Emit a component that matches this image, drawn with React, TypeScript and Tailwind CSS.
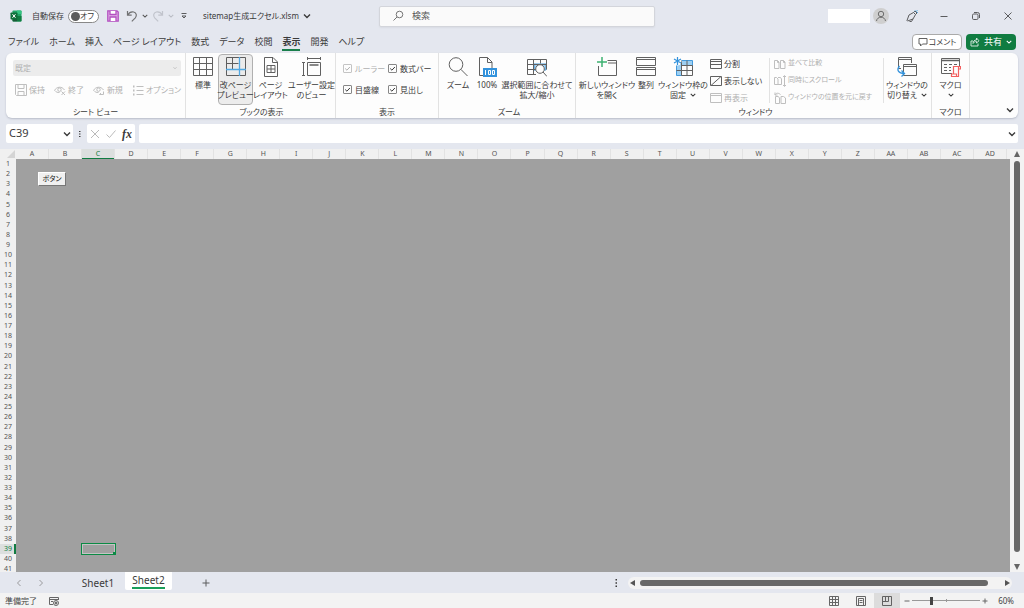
import { useState } from "react";
import type { ReactNode } from "react";
import clsx from "clsx";

const TABS = ["ファイル", "ホーム", "挿入", "ページ レイアウト", "数式", "データ", "校閲", "表示", "開発", "ヘルプ"];

const COLUMNS = Array.from({ length: 30 }, (_, i) =>
  i < 26 ? String.fromCharCode(65 + i) : "A" + String.fromCharCode(65 + i - 26)
);
const ROWS = Array.from({ length: 41 }, (_, i) => i + 1);

/* ---------- icons ---------- */

function Icon({ size = "size-5", box = 20, children }: { size?: string; box?: number; children: ReactNode }) {
  return (
    <svg className={clsx("shrink-0 opacity-80", size)} viewBox={`0 0 ${box} ${box}`} fill="none" stroke="currentColor" strokeWidth={1} aria-hidden="true">
      {children}
    </svg>
  );
}

function Chevron({ size = "size-1.5" }: { size?: string }) {
  return (
    <svg className={clsx("shrink-0", size)} viewBox="0 0 8 8" fill="none" stroke="currentColor" strokeWidth={1.4} aria-hidden="true">
      <path d="M1 2.5l3 3 3-3" />
    </svg>
  );
}

const ExcelIcon = () => (
  <svg className="size-3 shrink-0" viewBox="0 0 12 12" aria-hidden="true">
    <rect x="2.5" y="0.5" width="9" height="11" rx="0.8" fill="#21a366" />
    <path d="M7 .5h3.7a.8.8 0 01.8.8V4H7z" fill="#33c481" />
    <path d="M2.5 6H7v5.5H3.3a.8.8 0 01-.8-.8z" fill="#185c37" />
    <path d="M7 6h4.5v4.7a.8.8 0 01-.8.8H7z" fill="#107c41" />
    <rect x="0.5" y="2.5" width="7" height="7" rx="0.7" fill="#0f703b" />
    <path d="M2.5 4.2l3 3.6M5.5 4.2l-3 3.6" stroke="#fff" strokeWidth="1" />
  </svg>
);

const SaveIcon = () => (
  <svg className="size-3 shrink-0" viewBox="0 0 12 12" fill="none" stroke="#b34fc0" strokeWidth="1.3" aria-hidden="true">
    <path d="M.8.8h9.2l1.2 1.2v9.2H.8z" fill="#e2b5e8" />
    <path d="M3 1v3.5h6V1M3 11V7h6v4" fill="#fff" />
  </svg>
);

const UndoIcon = () => (
  <Icon size="size-3" box={12}>
    <path d="M1.5 1v4.2h4.2M1.7 5C3.2 2.5 5.5 1.5 7.7 2c2.7.7 3.5 3.8 1.6 5.8L5.8 11.3" strokeWidth="1.2" />
  </Icon>
);

const RedoIcon = () => (
  <Icon size="size-3" box={12}>
    <path d="M10.5 1v4.2H6.3M10.3 5C8.8 2.5 6.5 1.5 4.3 2 1.6 2.7.8 5.8 2.7 7.8l3.5 3.5" strokeWidth="1.2" />
  </Icon>
);

const NormalIcon = () => (
  <Icon>
    <path d="M.5.5h19v18H.5zM.5 6.5h19M.5 12.5h19M6.5.5v18M13.5.5v18" />
  </Icon>
);

const PageBreakIcon = () => (
  <Icon>
    <path d="M.5.5h19v18H.5zM.5 6.5h12M6.5.5v12" />
    <path d="M0 12.5h20M13.5 0v19" stroke="#2b98e0" strokeWidth="1.3" />
  </Icon>
);

const PageLayoutIcon = () => (
  <Icon>
    <path d="M3.5.5h8.5l4.5 4.5v14.5h-13zM11.5.5V5.5h5M6 8.5h8v7H6zM6 12h8M10 8.5v7" />
  </Icon>
);

const CustomViewIcon = () => (
  <Icon>
    <path d="M1.5 5v14M0 5.5h3M0 18.5h3M5 1.5h14M5.5 0v3M18.5 0v3M5.5 5.5h13v13h-13z" />
    <path d="M7.5 8h9" strokeWidth="1.5" />
  </Icon>
);

const ZoomIcon = () => (
  <Icon>
    <circle cx="8" cy="7.5" r="6.8" />
    <path d="M12.8 12.3l6.7 6.7" />
  </Icon>
);

const HundredIcon = () => (
  <Icon>
    <path d="M7 18.5H2.5V.5h8l4.5 4.5v6M10.5.5V5.5H15" />
    <rect x="6" y="11" width="14" height="9" fill="#0078d4" stroke="none" />
    <path d="M8.500 13v5M11.500 13.500h2v4h-2zM15.500 13.500h2v4h-2z" stroke="#fff" strokeWidth="1" />
  </Icon>
);

const ZoomSelectionIcon = () => (
  <Icon>
    <path d="M7 7h12v6H7z" fill="#8fc6ee" stroke="#1682d4" />
    <path d="M9 17.5H.5v-15h19v10M.5 7.5h19M.5 12.5h9M6.5 2.5v15M13.5 2.5v4" />
    <circle cx="13" cy="12" r="4.3" fill="#fff" />
    <path d="M16 15l4 4.5" />
  </Icon>
);

const NewWindowIcon = () => (
  <Icon>
    <path d="M1.5 9v9.5h18V3.5h-9" />
    <path d="M11 6h8" />
    <path d="M5 0v10M0 5h10" stroke="#0fa050" strokeWidth="1.5" />
  </Icon>
);

const ArrangeIcon = () => (
  <Icon>
    <path d="M.5.5h19v8H.5zM.5 10.5h19v8H.5z" />
    <path d="M.5 2.5h19M.5 12.5h19" />
  </Icon>
);

const FreezeIcon = () => (
  <Icon>
    <path d="M3.5 3.5h16v5h-11v10h-5z" fill="#86c4f0" stroke="#1682d4" />
    <path d="M8.5 8.5h11v10h-11M3.5 13.5h16M8.5 3.5v15M14 3.5v15" />
    <circle cx="4" cy="4" r="4.5" fill="#fdfdfd" stroke="none" />
    <path d="M4.5 0v8M1 2l7 4M8 2L1 6" stroke="#0078d4" strokeWidth="1.2" />
  </Icon>
);

const SwitchWindowIcon = () => (
  <Icon>
    <path d="M4 11.5H1.5V.5h13V6" />
    <path d="M1.5 2.5h13" />
    <path d="M6.5 7.5h13v11h-13z" fill="#fdfdfd" />
    <path d="M6.5 9.5h13" />
    <path d="M2.5 9c-3.5 4.500-.5 7.500 4.500 7.500M4.500 13.500l3 3-3 3" stroke="#0078d4" strokeWidth="1.300" />
  </Icon>
);

const MacroIcon = () => (
  <Icon>
    <path d="M11 16.5H.5v-15h18v8" />
    <path d="M.5 3.5h18" strokeWidth="1.5" />
    <path d="M3 7.5h3M8 7.5h3M13 7.5h3M3 10.5h3M8 10.5h2M3 13.5h3M8 13.5h2" />
    <path d="M12.5 17V9.5h7V12h-2v7.5h-7V17h5v2.5M17.5 12V9.5" stroke="#f03838" fill="#fdfdfd" strokeWidth="1.2" />
  </Icon>
);

const FloppyIcon = () => (
  <Icon size="size-3" box={12}>
    <path d="M.5.5h11v11H1.5l-1-1zM3 .5v4h6v-4M3 11.500V7.500h6v4" />
  </Icon>
);

const EyeIcon = ({ arrow }: { arrow?: boolean }) => (
  <Icon size="size-3" box={12}>
    <path d="M.5 6.500C2.500 2.500 8 2 10.500 6M5.500 8.500C3.500 8.700 2 8 .8 6.500" />
    <circle cx="5.500" cy="5.700" r="1.700" />
    {arrow ? <path d="M6.500 10.500h4v-3M6.500 10.500l1.500-1.500" /> : <path d="M7.500 7.500l3.500 3.500M11 7.500L7.500 11" />}
  </Icon>
);

const OptionsIcon = () => (
  <Icon size="size-3" box={12}>
    <path d="M4.500 2.500h7M4.500 6.500h7M4.500 10.500h7" />
    <path d="M1 2.500h1.500M1 6.500h1.500M1 10.500h1.500" strokeWidth="2" />
  </Icon>
);

const SplitIcon = () => (
  <Icon size="size-3" box={12}>
    <path d="M.5 1.500h11v9H.5zM.5 6.500h11M.5 3.500h11" />
  </Icon>
);

const HideIcon = () => (
  <Icon size="size-3" box={12}>
    <path d="M.5 1.500h11v9H.5zM1 10.500L11 1.500" />
  </Icon>
);

const UnhideIcon = () => (
  <Icon size="size-3" box={12}>
    <path d="M.5 1.500h11v9H.5zM.5 3.500h11" />
  </Icon>
);

const CompareIcon = () => (
  <Icon size="size-3" box={12}>
    <path d="M.5 2.500h3l1.500 1.500v6.500H.5zM6.500 2.500h3L11 4v6.500H6.500zM3.500 2.500V4.500H5M9.500 2.500V4.500H11" />
  </Icon>
);

const SyncScrollIcon = () => (
  <Icon size="size-3" box={12}>
    <path d="M.5 2.500h2l1.500 1.500v5.500H.5zM4 2.500h2.500L7.500 4v5.500H4M10.500 1v10M9 2l1.500-1.500L12 2M9 10l1.500 1.500L12 10" />
  </Icon>
);

const ResetPositionIcon = () => (
  <Icon size="size-3" box={12}>
    <path d="M1.500 4.500h2.500l1.500 1.200v5.800h-4zM7 4.500h2.500L11.500 6v5.500H7zM1 .5v2.500h2.500M1 3C2 1 4 .5 6.500 2.500" />
  </Icon>
);

/* ---------- ribbon parts ---------- */

function Group({ label, className, children }: { label?: string; className: string; children?: ReactNode }) {
  return (
    <section className={clsx("flex shrink-0 flex-col border-r border-[#e2e2e2]", className)}>
      <div className="flex flex-1 items-start pt-px">{children}</div>
      <h2 className="text-center leading-3">{label}</h2>
    </section>
  );
}

interface BigButtonProps {
  icon: ReactNode;
  lines: string[];
  className: string;
  active?: boolean;
  menu?: boolean;
}

function BigButton({ icon, lines, className, active, menu }: BigButtonProps) {
  return (
    <button
      type="button"
      aria-pressed={active}
      className={clsx(
        "flex h-[51px] shrink-0 flex-col items-center gap-[3px] rounded-sm border pt-0.5",
        active ? "border-[#b0b0b0] bg-[#ececec]" : "border-transparent hover:bg-[#f0f0f0]",
        className
      )}
    >
      {icon}
      <span className="flex flex-col items-center leading-[10px] whitespace-nowrap">
        {lines.map((line, i) => (
          <span key={line} className="flex items-center gap-1">
            {line}
            {menu && i === lines.length - 1 && lines.length > 1 && <Chevron />}
          </span>
        ))}
        {menu && lines.length === 1 && (
          <span className="flex h-2.5 items-center">
            <Chevron />
          </span>
        )}
      </span>
    </button>
  );
}

function SmallButton({ icon, label, disabled }: { icon: ReactNode; label: string; disabled?: boolean }) {
  return (
    <button type="button" disabled={disabled} className="flex h-[17px] items-center gap-0.5 whitespace-nowrap disabled:text-[#b0b0b0]">
      {icon}
      {label}
    </button>
  );
}

function Check({ label, disabled }: { label: string; disabled?: boolean }) {
  return (
    <label className={clsx("relative flex h-[21px] items-center gap-[3px] whitespace-nowrap", disabled && "text-[#b0b0b0]")}>
      <input
        type="checkbox"
        defaultChecked
        disabled={disabled}
        className="peer size-[9px] appearance-none rounded-[1px] border border-[#888] disabled:border-[#c4c4c4]"
      />
      <svg className="absolute left-0 hidden size-[9px] peer-checked:block" viewBox="0 0 9 9" fill="none" stroke="currentColor" aria-hidden="true">
        <path d="M2.200 4.500l1.700 1.700 3-3.200" />
      </svg>
      {label}
    </label>
  );
}

const Separator = () => <div className="mt-1 h-[45px] w-px shrink-0 bg-[#e2e2e2]" />;

function Ribbon() {
  return (
    <div className="mx-1.5 mt-px flex h-[65px] shrink-0 overflow-hidden rounded-md bg-[#fdfdfd] text-[8px] shadow-[0_1px_2px_#b8bcc8]">
      <Group label="シート ビュー" className="w-[180px]">
        <div className="flex flex-1 flex-col pt-1.5 pr-1 pl-[7px] text-[#b0b0b0]">
          <div className="relative flex items-center">
            <select disabled aria-label="シート ビュー" className="h-4 w-full appearance-none rounded-xs bg-[#ececec] pl-0.5 opacity-100">
              <option>既定</option>
            </select>
            <span className="absolute right-1">
              <Chevron size="size-1" />
            </span>
          </div>
          <div className="flex justify-between pt-[5px] pl-0.5">
            <SmallButton disabled icon={<FloppyIcon />} label="保持" />
            <SmallButton disabled icon={<EyeIcon />} label="終了" />
            <SmallButton disabled icon={<EyeIcon arrow />} label="新規" />
            <SmallButton disabled icon={<OptionsIcon />} label="オプション" />
          </div>
        </div>
      </Group>

      <Group label="ブックの表示" className="w-[150px] pl-0.5">
        <BigButton className="w-[30px]" icon={<NormalIcon />} lines={["標準"]} />
        <BigButton className="w-[35px]" active icon={<PageBreakIcon />} lines={["改ページ", "プレビュー"]} />
        <BigButton className="w-[35px]" icon={<PageLayoutIcon />} lines={["ページ", "レイアウト"]} />
        <BigButton className="w-[47px]" icon={<CustomViewIcon />} lines={["ユーザー設定", "のビュー"]} />
      </Group>

      <Group label="表示" className="w-[103px]">
        <div className="grid grid-cols-[45px_1fr] pt-1 pl-[7px]">
          <Check label="ルーラー" disabled />
          <Check label="数式バー" />
          <Check label="目盛線" />
          <Check label="見出し" />
        </div>
      </Group>

      <Group label="ズーム" className="w-[137px] pl-1">
        <BigButton className="w-[30px]" icon={<ZoomIcon />} lines={["ズーム"]} />
        <BigButton className="w-7" icon={<HundredIcon />} lines={["100%"]} />
        <BigButton className="w-[72px]" icon={<ZoomSelectionIcon />} lines={["選択範囲に合わせて", "拡大/縮小"]} />
      </Group>

      <Group label="ウィンドウ" className="w-[356px] pl-1">
        <BigButton className="w-[54px]" icon={<NewWindowIcon />} lines={["新しいウィンドウ", "を開く"]} />
        <BigButton className="w-6" icon={<ArrangeIcon />} lines={["整列"]} />
        <BigButton className="w-[50px]" menu icon={<FreezeIcon />} lines={["ウィンドウ枠の", "固定"]} />
        <div className="flex w-[61px] flex-col pt-px pl-0.5">
          <SmallButton icon={<SplitIcon />} label="分割" />
          <SmallButton icon={<HideIcon />} label="表示しない" />
          <SmallButton icon={<UnhideIcon />} label="再表示" disabled />
        </div>
        <Separator />
        <div className="flex w-[113px] flex-col pt-px pl-1 text-[7px]">
          <SmallButton icon={<CompareIcon />} label="並べて比較" disabled />
          <SmallButton icon={<SyncScrollIcon />} label="同時にスクロール" disabled />
          <SmallButton icon={<ResetPositionIcon />} label="ウィンドウの位置を元に戻す" disabled />
        </div>
        <Separator />
        <BigButton className="w-[46px]" menu icon={<SwitchWindowIcon />} lines={["ウィンドウの", "切り替え"]} />
      </Group>

      <Group label="マクロ" className="w-[38px]">
        <BigButton className="w-full" menu icon={<MacroIcon />} lines={["マクロ"]} />
      </Group>

      <div className="flex flex-1 items-end justify-end p-1">
        <button type="button" aria-label="リボンの表示オプション">
          <Chevron size="size-2" />
        </button>
      </div>
    </div>
  );
}

/* ---------- window chrome ---------- */

function TitleBar() {
  return (
    <header className="grid h-8 shrink-0 grid-cols-[379fr_276fr_369fr] items-center">
      <div className="flex items-center pl-2.5 text-[8px] whitespace-nowrap">
        <ExcelIcon />
        <span className="ml-2.5">自動保存</span>
        <button
          type="button"
          role="switch"
          aria-checked={false}
          aria-label="自動保存"
          className="ml-1 flex h-[13px] w-[31px] items-center justify-between rounded-full border border-[#888] bg-white pr-1 pl-0.5"
        >
          <span className="size-[9px] rounded-full bg-[#5c5c5c]" />
          オフ
        </button>
        <button type="button" aria-label="上書き保存" className="ml-2">
          <SaveIcon />
        </button>
        <button type="button" aria-label="元に戻す" className="ml-[7px] flex items-center gap-1 text-[#555]">
          <UndoIcon />
          <Chevron />
        </button>
        <button type="button" aria-label="やり直し" disabled className="ml-1 flex items-center gap-1 text-[#b9bcc4]">
          <RedoIcon />
          <Chevron />
        </button>
        <button type="button" aria-label="クイック アクセス ツール バーのユーザー設定" className="ml-1.5">
          <Icon size="size-2" box={8}>
            <path d="M1.500 1.500h5M2 4l2 2 2-2z" />
          </Icon>
        </button>
        <button type="button" className="ml-[15px] flex items-center gap-1">
          sitemap生成エクセル.xlsm
          <Chevron size="size-2" />
        </button>
      </div>

      <label className="flex h-[21px] items-center gap-2 rounded-xs border border-[#d3d5db] bg-[#fafafa] pl-3 text-[#555] shadow-xs">
        <Icon size="size-3" box={12}>
          <circle cx="7.500" cy="4.500" r="3.300" />
          <path d="M5 7L1.500 10.500" />
        </Icon>
        <input type="search" placeholder="検索" aria-label="検索" className="min-w-0 flex-1 bg-transparent text-[9px] outline-none placeholder:text-[#555]" />
      </label>

      <div className="flex items-center justify-end">
        <span className="h-3.5 w-[42px] bg-white" />
        <button type="button" aria-label="アカウント" className="mx-[3px] rounded-full bg-[#cfcfcf] text-[#555]">
          <Icon size="size-4" box={16}>
            <circle cx="8" cy="6" r="2.700" />
            <path d="M3.500 13c.5-5 8.500-5 9 0" />
          </Icon>
        </button>
        <button type="button" aria-label="近日公開の機能" className="ml-1 flex h-8 w-8 items-center justify-center">
          <Icon size="size-3" box={12}>
            <path d="M1 10.500L3 5l4.500-2.500 2 2L7 9l-5.500 2zM3.500 11.500h2L7 9M7.500 2.500L9 1l2 2-1.500 1.500" />
            <path d="M8.500 1l1-.8M11 3l.8-1M10 1.500l1.500-1" stroke="#2b98e0" />
          </Icon>
        </button>
        <button type="button" aria-label="最小化" className="flex h-8 w-8 items-center justify-center">
          <Icon size="size-2" box={8}>
            <path d="M.5 4.500h7" />
          </Icon>
        </button>
        <button type="button" aria-label="元のサイズに戻す" className="flex h-8 w-8 items-center justify-center">
          <Icon size="size-2" box={8}>
            <rect x=".5" y="2" width="5.500" height="5.500" rx="1.200" />
            <path d="M2 .5h3.500a2 2 0 012 2V6" />
          </Icon>
        </button>
        <button type="button" aria-label="閉じる" className="flex h-8 w-8 items-center justify-center">
          <Icon size="size-2" box={8}>
            <path d="M.5.5l7 7M7.500.5l-7 7" />
          </Icon>
        </button>
      </div>
    </header>
  );
}

function TabRow() {
  const [tab, setTab] = useState("表示");

  return (
    <div className="flex h-5 shrink-0 items-center justify-between px-2 text-[9px]">
      <nav className="flex gap-2.5">
        {TABS.map((name) => (
          <button
            key={name}
            type="button"
            onClick={() => setTab(name)}
            className={clsx("h-[18px] border-b-2 pt-0.5 leading-[14px] whitespace-nowrap", tab === name ? "border-[#1a7f4b] font-bold" : "border-transparent")}
          >
            {name}
          </button>
        ))}
      </nav>
      <div className="flex gap-1">
        <button type="button" className="flex h-4 w-[50px] items-center justify-center gap-px rounded-sm border border-[#aaa] bg-white text-[8px]">
          <Icon size="size-2.5" box={10}>
            <path d="M1 1.500h8v5.500H4.500L2.500 9V7H1z" />
          </Icon>
          コメント
        </button>
        <button type="button" className="flex h-4 w-[50px] items-center justify-center gap-1 rounded-sm bg-[#107c41] text-white">
          <Icon size="size-2.5" box={10}>
            <path d="M3 4H1v5h7V6.500M3 6.500C3 4 4.500 3 6.500 3V1L9 3.800 6.500 6V4.500C5 4.500 4 5 3 6.500z" />
          </Icon>
          共有
          <Chevron />
        </button>
      </div>
    </div>
  );
}

function FormulaBar() {
  return (
    <div className="flex h-[31px] shrink-0 items-center gap-1 px-1.5">
      <div className="flex h-[19px] w-[67px] items-center rounded-xs bg-white pr-0.5 pl-[3px]">
        <input aria-label="名前ボックス" defaultValue="C39" className="min-w-0 flex-1 text-[11px] outline-none" />
        <Chevron size="size-2" />
      </div>
      <svg className="size-1.5 shrink-0" viewBox="0 0 6 6" fill="currentColor" aria-hidden="true">
        <path d="M2 0h1.500v1H2zM2 2.500h1.500v1H2zM2 5h1.500v1H2z" />
      </svg>
      <div className="flex h-[19px] w-12 items-center justify-around rounded-xs bg-white">
        <button type="button" disabled aria-label="キャンセル" className="text-[#aaa]">
          <Icon size="size-2.5" box={10}>
            <path d="M1 1l8 8M9 1L1 9" />
          </Icon>
        </button>
        <button type="button" disabled aria-label="入力" className="text-[#aaa]">
          <Icon size="size-2.5" box={10}>
            <path d="M.5 5.500l3 3 6-7" />
          </Icon>
        </button>
        <button type="button" aria-label="関数の挿入" className="font-['Liberation_Serif',serif] text-[12px] leading-3 font-bold italic">
          fx
        </button>
      </div>
      <div className="flex h-[19px] flex-1 items-center rounded-xs bg-white pr-0.5">
        <input aria-label="数式バー" className="min-w-0 flex-1 px-1 text-[11px] outline-none" />
        <Chevron size="size-2" />
      </div>
    </div>
  );
}

/* ---------- sheet ---------- */

function Sheet() {
  return (
    <main className="flex min-h-0 flex-1">
      <div className="flex min-w-0 flex-1 flex-col text-[7px] text-[#555]">
        <div className="flex h-[10px] shrink-0 bg-[#f0f0f0]">
          <div className="flex w-4 shrink-0 items-end justify-end p-px text-[#d4d4d4]">
            <svg className="size-2" viewBox="0 0 8 8" fill="currentColor" aria-hidden="true">
              <path d="M8 0v8H0z" />
            </svg>
          </div>
          <div className="grid flex-1 grid-cols-[repeat(30,1fr)] pr-[3px] text-center leading-[10px]">
            {COLUMNS.map((col) => (
              <span
                key={col}
                className={clsx(
                  "min-w-0 border-r border-[#e2e2e2]",
                  col === "C" && "bg-[#dcdfde] text-[#107c41] shadow-[inset_0_-1px_#107c41,0_1px_#107c41]"
                )}
              >
                {col}
              </span>
            ))}
          </div>
        </div>

        <div className="flex min-h-0 flex-1">
          <div className="grid w-4 shrink-0 grid-rows-[repeat(40,1fr)_8px] bg-[#f0f0f0] text-center leading-[10px]">
            {ROWS.map((row) => (
              <span key={row} className={clsx("min-h-0", row === 39 && "bg-[#dcdfde] text-[#107c41] shadow-[inset_-2px_0_#107c41]")}>
                {row}
              </span>
            ))}
          </div>
          <div className="relative grid flex-1 grid-cols-[repeat(30,1fr)] grid-rows-[repeat(40,1fr)_8px] bg-[#a0a0a0] pr-[3px]">
            <div className="relative col-start-3 row-start-39 -m-px border border-[#0b8a44]">
              <div className="h-full border border-[#c4c4c4]" />
              <span className="absolute -right-px -bottom-px size-[3px] bg-[#0b8a44]" />
            </div>
            <button
              type="button"
              className="absolute top-[13px] left-[22px] h-[14px] w-7 border border-t-white border-r-[#777] border-b-[#777] border-l-white bg-[#f0f0f0] text-[7px] leading-3 text-[#222]"
            >
              ボタン
            </button>
          </div>
        </div>
      </div>

      <div className="flex w-3.5 shrink-0 flex-col items-center gap-1 bg-[#f3f3f3] py-0.5 text-[#666]">
        <svg className="size-1.5 shrink-0" viewBox="0 0 6 6" fill="currentColor" aria-hidden="true">
          <path d="M3 0l3 6H0z" />
        </svg>
        <div className="w-1.5 flex-1 rounded-full bg-[#686868]" />
        <svg className="mt-2 size-1.5 shrink-0" viewBox="0 0 6 6" fill="currentColor" aria-hidden="true">
          <path d="M3 6l3-6H0z" />
        </svg>
      </div>
    </main>
  );
}

function SheetTabs() {
  return (
    <div className="flex h-[21px] shrink-0 items-center text-[10px]">
      <div className="flex w-[71px] items-center gap-3.5 pl-[15px] text-[#888]">
        <button type="button" aria-label="前のシート">
          <Icon size="size-2" box={8}>
            <path d="M5.500 1l-3 3 3 3" />
          </Icon>
        </button>
        <button type="button" aria-label="次のシート">
          <Icon size="size-2" box={8}>
            <path d="M2.500 1l3 3-3 3" />
          </Icon>
        </button>
      </div>
      <button type="button" className="w-[54px] leading-4">
        Sheet1
      </button>
      <button type="button" className="flex h-[18px] w-[47px] justify-center self-start rounded-b-xs bg-white">
        <span className="h-[17px] border-b-2 border-[#1a9f5b] leading-4">Sheet2</span>
      </button>
      <button type="button" aria-label="新しいシート" className="ml-[30px]">
        <Icon size="size-2" box={8}>
          <path d="M4 .5v7M.5 4h7" />
        </Icon>
      </button>
      <div className="ml-auto flex w-[412px] items-center gap-2 pr-3">
        <svg className="size-2 shrink-0" viewBox="0 0 8 8" fill="currentColor" aria-hidden="true">
          <path d="M3.500 0H5v1.500H3.500zM3.500 3.200H5v1.500H3.500zM3.500 6.500H5V8H3.500z" />
        </svg>
        <div className="flex h-3 flex-1 items-center gap-1 rounded-full bg-[#f3f3f3] px-0.5 text-[#555]">
          <svg className="size-1.5 shrink-0" viewBox="0 0 6 6" fill="currentColor" aria-hidden="true">
            <path d="M0 3l5-3v6z" />
          </svg>
          <div className="h-1.5 flex-1 rounded-full bg-[#686868]" />
          <svg className="ml-3 size-1.5 shrink-0" viewBox="0 0 6 6" fill="currentColor" aria-hidden="true">
            <path d="M6 3L1 0v6z" />
          </svg>
        </div>
      </div>
    </div>
  );
}

function StatusBar() {
  const [zoom, setZoom] = useState(60);

  return (
    <footer className="flex h-[15px] shrink-0 items-center bg-[#f3f3f3] pr-2.5 pl-[5px] text-[8px] text-[#444]">
      <span>準備完了</span>
      <button type="button" aria-label="マクロの記録" className="ml-3">
        <Icon size="size-2.5" box={10}>
          <path d="M4 8.500H.5v-7h9V4M.5 3.500h9M2 5.500h2" />
          <circle cx="7" cy="7" r="2.500" />
          <circle cx="7" cy="7" r="1" fill="currentColor" />
        </Icon>
      </button>
      <div className="ml-auto flex h-full items-center">
        <button type="button" aria-label="標準" className="flex h-full w-[27px] items-center justify-center">
          <Icon size="size-2.5" box={10}>
            <path d="M.5.5h9v9h-9zM.5 3.500h9M.5 6.500h9M3.500.5v9M6.500.5v9" />
          </Icon>
        </button>
        <button type="button" aria-label="ページ レイアウト" className="flex h-full w-[27px] items-center justify-center">
          <Icon size="size-2.5" box={10}>
            <path d="M.5.5h9v9h-9zM2.500 2.500h5v7h-5zM3.500 4.500h3M3.500 6.500h3" />
          </Icon>
        </button>
        <button type="button" aria-label="改ページ プレビュー" className="flex h-full w-[26px] items-center justify-center bg-[#dcdcdc]">
          <Icon size="size-2.5" box={10}>
            <path d="M.5.5h9v9h-9zM.5 5.500h6v-5M3.500.5v5" />
          </Icon>
        </button>
        <button type="button" aria-label="縮小" onClick={() => setZoom(Math.max(10, zoom - 10))} className="ml-1">
          <Icon size="size-1.5" box={6}>
            <path d="M.5 3h5" />
          </Icon>
        </button>
        <div className="relative mx-0.5 flex items-center">
          <input
            type="range"
            min={10}
            max={190}
            aria-label="ズーム"
            value={zoom}
            onChange={(e) => setZoom(Number(e.target.value))}
            className="h-px w-[68px] appearance-none bg-[#999] [&::-webkit-slider-thumb]:h-2 [&::-webkit-slider-thumb]:w-[3px] [&::-webkit-slider-thumb]:appearance-none [&::-webkit-slider-thumb]:bg-[#444]"
          />
          <span className="absolute left-1/2 h-[3px] w-px bg-[#999]" />
        </div>
        <button type="button" aria-label="拡大" onClick={() => setZoom(Math.min(190, zoom + 10))}>
          <Icon size="size-1.5" box={6}>
            <path d="M.5 3h5M3 .5v5" />
          </Icon>
        </button>
        <span className="w-[26px] text-right">{zoom}%</span>
      </div>
    </footer>
  );
}

export default function App() {
  return (
    <div
      lang="ja"
      className="flex h-screen flex-col overflow-hidden bg-[#e4e7ef] font-['Noto_Sans','Noto_Sans_CJK_JP',sans-serif] text-[#3a3a3a] [font-feature-settings:'palt']"
    >
      <TitleBar />
      <TabRow />
      <Ribbon />
      <FormulaBar />
      <Sheet />
      <SheetTabs />
      <StatusBar />
    </div>
  );
}
